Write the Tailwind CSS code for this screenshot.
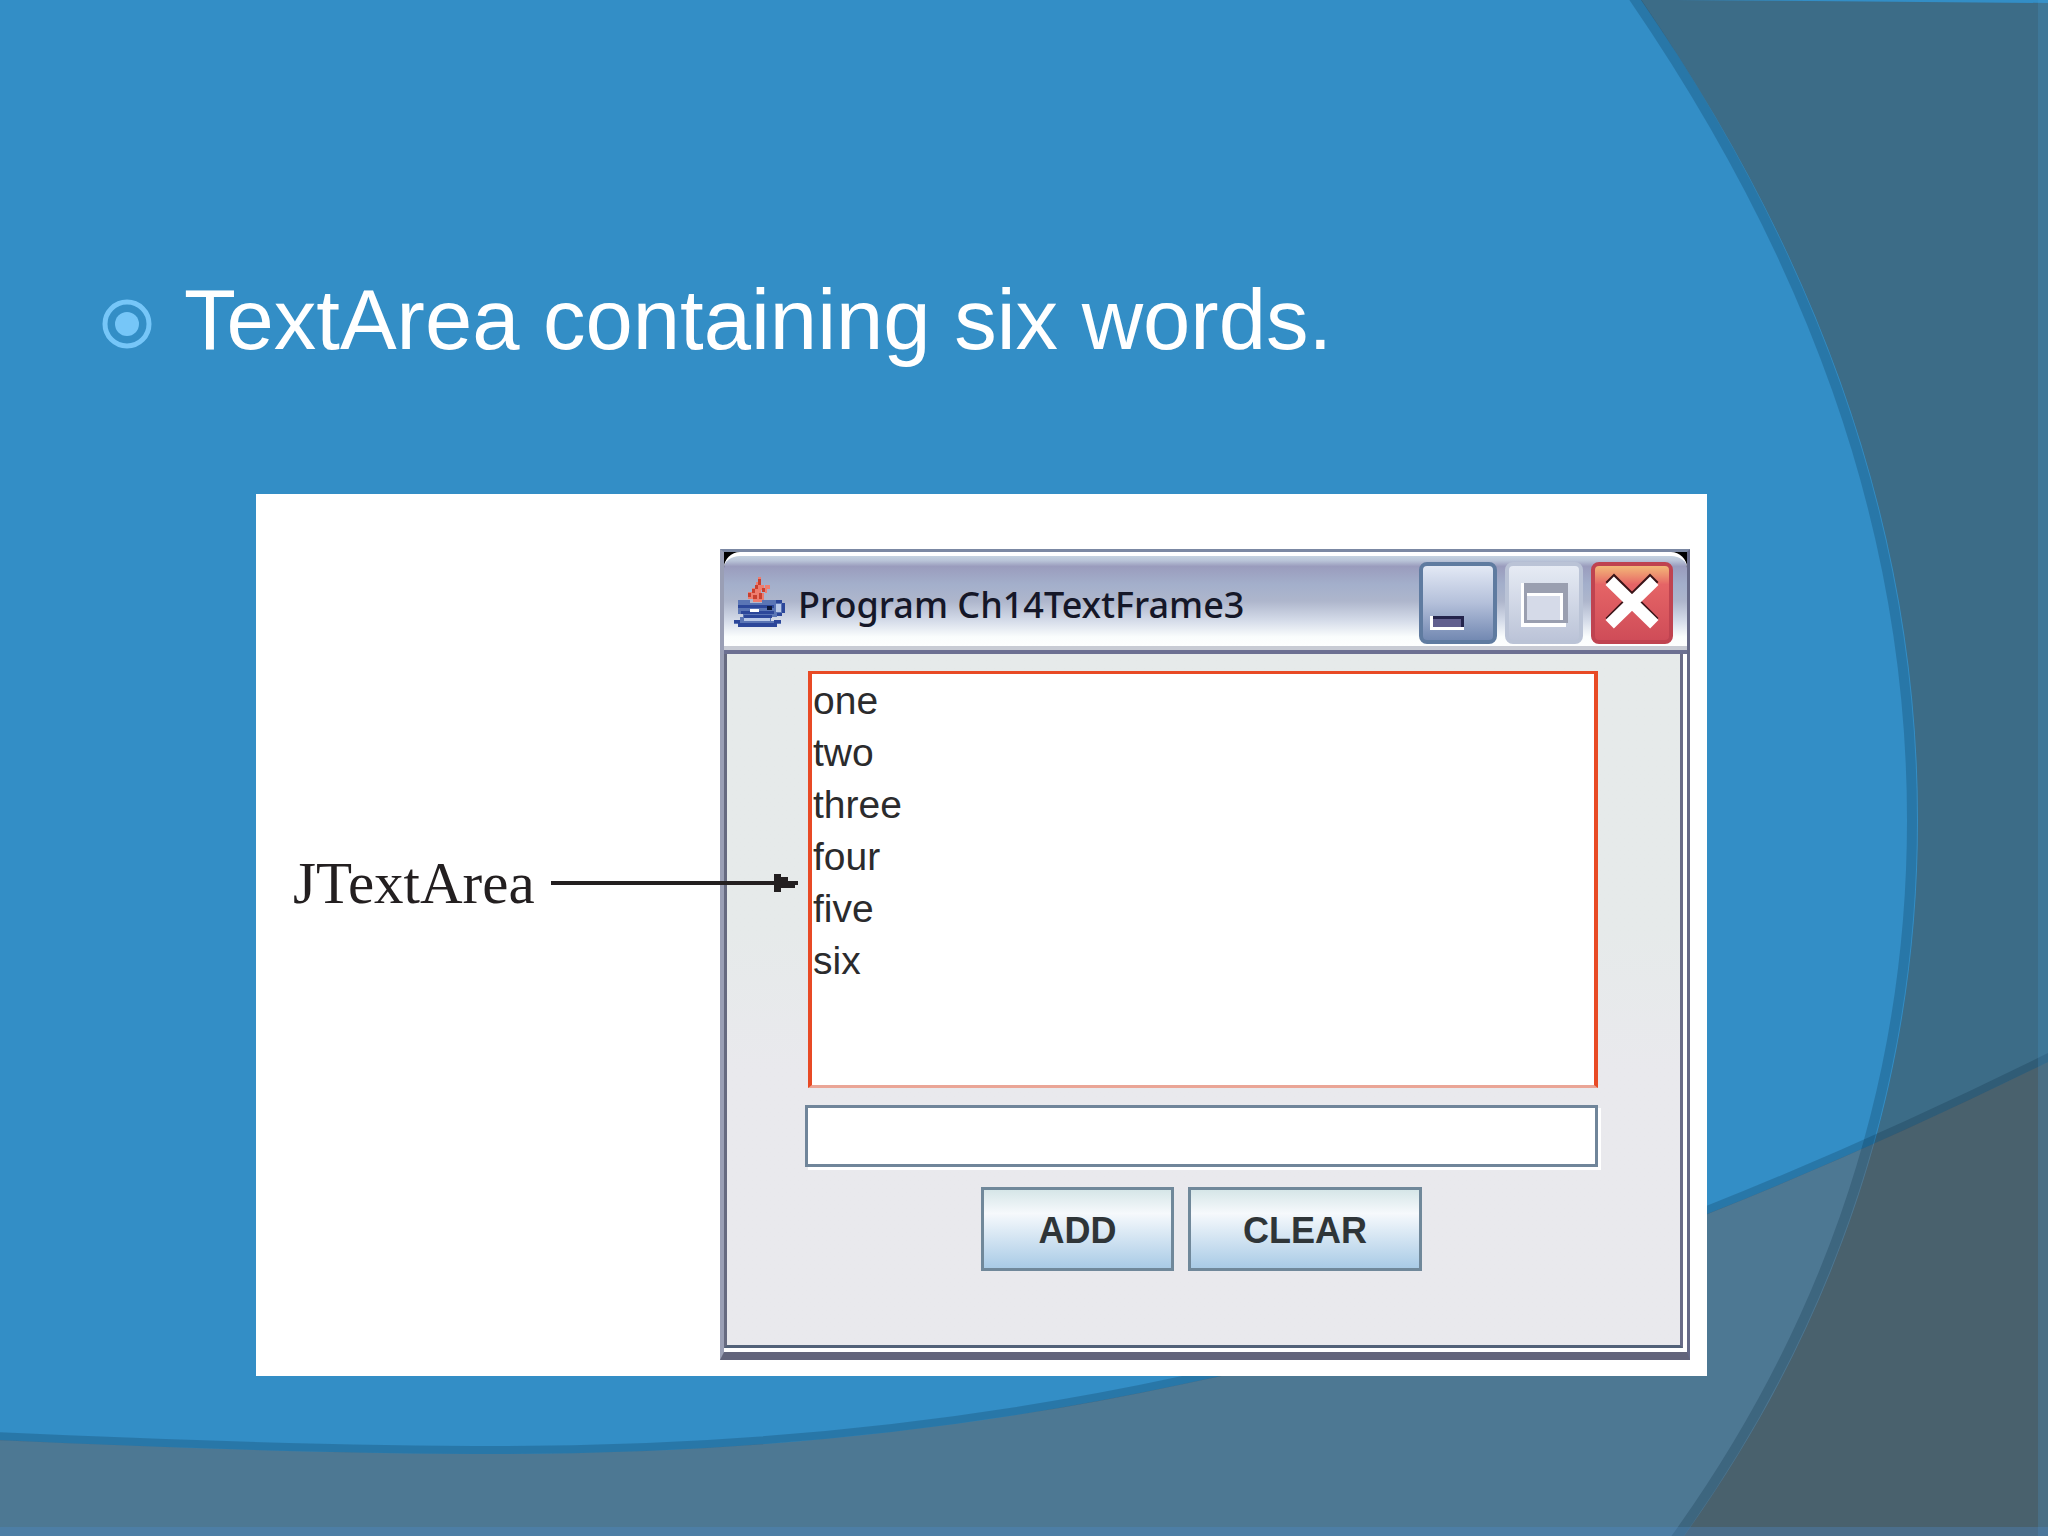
<!DOCTYPE html>
<html lang="en">

<head>
  <meta charset="UTF-8" />
  <meta name="viewport" content="width=device-width, initial-scale=1.0" />
  <title>TextArea containing six words</title>
  <script src="https://cdn.jsdelivr.net/npm/@tailwindcss/browser@4"></script>
</head>

<body class="bg-[#338ec6] font-['Liberation_Sans',Arial,sans-serif]">

  <main class="relative isolate min-h-screen overflow-hidden pt-[270px] pb-[159px]">

    <!-- slide background -->
    <svg class="absolute inset-0 -z-10 h-full w-full" viewBox="0 0 2048 1536" preserveAspectRatio="none" aria-hidden="true">
      <path fill="#4d7893" d="M0 1440C170 1448 340 1454 500 1454C740 1454 970 1430 1183 1384C1360 1349 1540 1285 1707 1214C1830 1165 1940 1115 2048 1062V1540H0Z" />
      <path fill="#454a48" fill-opacity=".5" d="M1641 0C1812 248 1918 520 1918 820C1918 1110 1818 1350 1684 1536H2048V3L1672 0Z" />
      <path fill="none" stroke="#001e32" stroke-opacity=".2" stroke-width="8" d="M-5 1436C170 1444 340 1450 500 1450C740 1450 970 1426 1183 1380C1360 1345 1540 1281 1707 1210C1830 1161 1940 1111 2053 1055" />
      <path fill="none" stroke="#001e32" stroke-opacity=".2" stroke-width="10" d="M1632 -5C1806 248 1912 520 1912 820C1912 1110 1812 1350 1674 1541" />
      <path fill="#4aa0d8" fill-opacity=".22" d="M2038 0H2048V1536H2038Z" />
      <path fill="#5090d0" fill-opacity=".3" d="M0 1527H2048V1536H0Z" />
    </svg>

    <h1 class="flex items-center gap-8 pl-[102px] text-[85px] leading-[100px] text-white">
      <svg class="mt-2 h-[50px] w-[50px] shrink-0" viewBox="0 0 50 50" fill="none" aria-hidden="true">
        <circle cx="25" cy="25" r="22" stroke="#76c6f8" stroke-width="5" />
        <circle cx="25" cy="25" r="12" fill="#76c6f8" />
      </svg>
      TextArea containing six words.
    </h1>

    <figure class="mt-[124px] mr-[341px] ml-64 flex bg-white pt-[55px] pr-[17px] pb-4">

      <!-- callout -->
      <div class="flex w-[464px] shrink-0 items-center self-start pt-[304px] pl-[37px]">
        <label for="words" class="font-['Liberation_Serif','Times_New_Roman',serif] text-[59px] leading-[60px] text-[#231f20]">JTextArea</label>
        <div class="relative z-10 -mr-[78px] ml-4 flex flex-1 items-center">
          <div class="h-1 flex-1 bg-[#231f20]"></div>
          <svg class="h-[18px] w-6" viewBox="0 0 24 18" fill="#231f20" aria-hidden="true">
            <path d="M0 0H7V3H14V7H24V11H21V14H7V18H0Z" />
          </svg>
        </div>
      </div>

      <!-- window -->
      <section class="min-w-0 flex-1 border-t-3 border-r-3 border-b-8 border-l-4 border-t-[#7b88a3] border-r-[#666a88] border-b-[#62647b] border-l-[#9a9fb5] bg-black">
        <header class="flex h-[102px] items-center rounded-t-2xl border-t-4 border-b-4 border-t-white border-b-[#6c7092] bg-[linear-gradient(#c5d2e0_0%,#b9c4d8_5%,#9a9cbd_11%,#a3afcb_30%,#aeb6cc_48%,#d3dae8_68%,#fafdfd_86%,#ffffff_100%)] pr-[14px] pl-[10px] shadow-[inset_0_-4px_0_#c8cbd4]">
          <svg class="h-[52px] w-[52px] shrink-0" viewBox="12 12 52 52" shape-rendering="crispEdges" aria-hidden="true">
            <path fill="#ee7d6e" d="M36 12H39V20H42V25H39V28H43V20H48V24H45V28H42V37H31V34H26V27H30V23H34V17H36Z" />
            <path fill="#c8402f" d="M36 14H39V20H36ZM33 20H36V24H33ZM30 24H33V28H30ZM26 28H29V32H26ZM31 30H35V34H31ZM40 23H43V27H40ZM37 28H40V34H37Z" />
            <path fill="#5a75b5" d="M16 35H28V38H40V35H54V38H60V49H55V52H49V56H59V59H54V62H16V59H12V56H18V52H21V49H16Z" />
            <path fill="#2c479a" d="M16 40H52V43H16ZM19 46H52V49H19ZM22 50H50V53H22ZM12 55H18V58H52V55H59V58H55V62H16V58H12ZM54 35H60V38H54ZM60 38H63V48H60ZM55 48H60V51H55Z" />
            <path fill="#b9c9e8" d="M54 39H59V47H54ZM22 53H48V56H22Z" />
            <path fill="#ffffff" d="M28 44H37V47H28Z" />
            <path fill="#0b1738" d="M45 41H50V45H45Z" />
          </svg>
          <h2 class="ml-3 flex-1 truncate pt-1 font-['Noto_Sans','Open_Sans',sans-serif] text-[36px] leading-[48px] font-medium text-[#151728]">Program Ch14TextFrame3</h2>
          <div class="flex gap-2">
            <button type="button" aria-label="Minimize" class="h-[82px] w-[78px] rounded-lg border-4 border-[#5f7ba0] bg-linear-to-b from-[#e3e9f5] via-[#b4c0da] to-[#7389b2]">
              <svg class="h-full w-full" viewBox="0 0 70 74" aria-hidden="true">
                <path fill="#fff" d="M7 50H41V64H7Z" />
                <path fill="#24244c" d="M10 50H41V61H10Z" />
                <path fill="#62608f" d="M10 53H38V61H10Z" />
              </svg>
            </button>
            <button type="button" aria-label="Maximize" class="h-[82px] w-[78px] rounded-lg border-4 border-[#bac3d6] bg-linear-to-b from-[#e6ebf4] to-[#bcc4d8]">
              <svg class="h-full w-full" viewBox="0 0 70 74" fill="none" aria-hidden="true">
                <path fill="#fff" d="M12 17H57V61H12Z" />
                <path fill="#9a9fb0" d="M15 17H59V57H15Z" />
                <path fill="#fff" d="M18 27H54V54H18Z" />
                <path fill="#d5dae8" d="M18 30H51V54H18Z" />
              </svg>
            </button>
            <button type="button" aria-label="Close" class="h-[82px] w-[82px] rounded-lg border-4 border-[#bf4350] bg-linear-to-b from-[#f2b878] via-[#e56466] via-25% to-[#cf4c58]">
              <svg class="h-full w-full" viewBox="0 0 74 74" fill="none" stroke-linecap="square" aria-hidden="true">
                <path stroke="#3a1418" stroke-width="12" d="M19 16L55 52M55 16L19 52" />
                <path stroke="#fff" stroke-width="12" d="M19 19L55 54M55 19L19 54" />
              </svg>
            </button>
          </div>
        </header>

        <div class="border-r-4 border-b-4 border-white">
          <div class="border-r-3 border-b-3 border-l-3 border-r-[#6a6c88] border-b-[#526178] border-l-[#666a80] bg-linear-to-b from-[#e6eaea] from-40% to-[#e9e9ed] to-60% pt-[17px] pr-[82px] pb-[74px] pl-[78px]">
            <div class="pl-[3px]">
              <textarea id="words" rows="6" spellcheck="false" class="block h-[417px] w-full resize-none overflow-hidden border-x-4 border-y-3 border-[#e84a25] border-b-[#eaa596] bg-white pl-px pt-px text-[39px] leading-[52px] text-[#2b2b2d] outline-none">one
two
three
four
five
six</textarea>
            </div>
            <input type="text" aria-label="New word" class="mt-[17px] block h-[62px] w-full border-3 border-[#70859a] bg-white px-2 text-[39px] text-[#2b2b2d] shadow-[3px_3px_0_#ffffff] outline-none" />
            <div class="mt-5 flex justify-center gap-[14px]">
              <button type="button" class="h-[84px] w-[193px] border-3 border-[#70889a] bg-linear-to-b from-[#d6e6e8] via-[#f6f9fc] via-30% to-[#a9cbe6] pt-1 text-[36px] font-bold text-[#2f3538]">ADD</button>
              <button type="button" class="h-[84px] w-[234px] border-3 border-[#70889a] bg-linear-to-b from-[#d6e6e8] via-[#f6f9fc] via-30% to-[#a9cbe6] pt-1 text-[36px] font-bold text-[#2f3538]">CLEAR</button>
            </div>
          </div>
        </div>
      </section>
    </figure>

  </main>

</body>

</html>
